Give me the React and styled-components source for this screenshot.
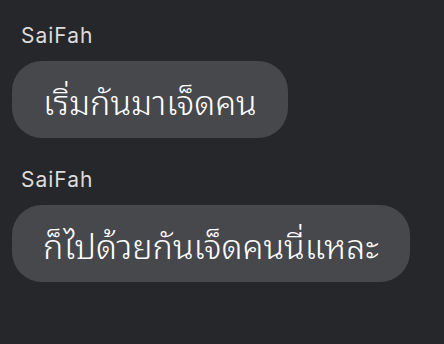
import React from "react";
import styled, { createGlobalStyle } from "styled-components";

const Global = createGlobalStyle`
  html, body {
    margin: 0;
    padding: 0;
    background: #26272b;
  }
  body {
    font-family: "Inter", "Liberation Sans", sans-serif;
  }
`;

const Page = styled.div`
  width: 444px;
  height: 344px;
  box-sizing: border-box;
  padding: 24px 12px 0 12px;
  display: flex;
  flex-direction: column;
  gap: 30px;
  background: #26272b;
`;

const Message = styled.div`
  display: flex;
  flex-direction: column;
  align-items: flex-start;
  gap: 13px;
`;

const Sender = styled.div`
  padding-left: 9px;
  color: #dcdcde;
  font-size: 21px;
  letter-spacing: 1px;
  line-height: 24px;
`;

const Bubble = styled.div`
  background: #47484c;
  color: #ffffff;
  border-radius: 30px;
  height: 77px;
  box-sizing: border-box;
  padding: 0 31px;
  display: flex;
  align-items: center;
  font-family: "Noto Sans Thai Looped", "Noto Sans", sans-serif;
  font-weight: 300;
  font-size: 34px;
  white-space: nowrap;
`;

const messages = [
  { id: 1, sender: "SaiFah", text: "เริ่มกันมาเจ็ดคน" },
  { id: 2, sender: "SaiFah", text: "ก็ไปด้วยกันเจ็ดคนนี่แหละ" },
];

export default function App() {
  return (
    <>
      <Global />
      <Page>
        {messages.map((m) => (
          <Message key={m.id}>
            <Sender>{m.sender}</Sender>
            <Bubble>{m.text}</Bubble>
          </Message>
        ))}
      </Page>
    </>
  );
}
